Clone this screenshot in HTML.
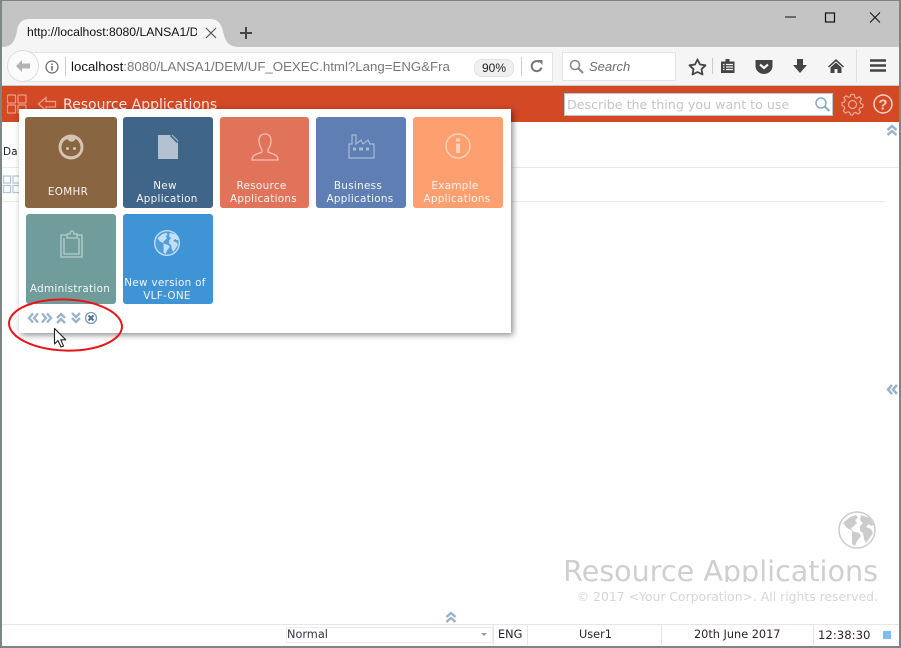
<!DOCTYPE html>
<html><head><meta charset="utf-8"><style>
html,body{margin:0;padding:0;background:#fff}
#r{position:relative;width:901px;height:648px;overflow:hidden;background:#fff;font-family:"DejaVu Sans",sans-serif}
#r div,#r svg,#r span.a{position:absolute}
.t{white-space:nowrap}
.tile{border-radius:3px;color:#f4f4f4;font-size:10.4px;line-height:13px;text-align:center;letter-spacing:.3px}
.tile .l{left:-1px;right:1px;top:76px;white-space:nowrap}
.tile .f{left:-5px;right:1px;top:63px;white-space:nowrap}
.fr{font-family:"Liberation Sans",sans-serif}
.st{font-size:11.300px;line-height:14px;color:#322}
</style></head><body><div id="r">
<!-- tab strip -->
<div style="left:0;top:0;width:901px;height:47px;background:#c4c4c4"></div>
<div style="left:0;top:47px;width:901px;height:38px;background:#f5f5f5"></div>
<div style="left:0;top:85px;width:901px;height:1px;background:#c9c9c9"></div>
<svg style="left:2px;top:19px" width="240" height="29"><path d="M0 28C10 28 13 22 15 12C16 5 19 0 28 0H208C216 0 219 5 221 12C223 22 226 28 238 28Z" fill="#f5f5f5"/></svg>
<div class="t fr" style="left:27px;top:25px;width:170px;overflow:hidden;font-size:12.200px;line-height:15px;color:#111">http://localhost:8080/LANSA1/D</div>
<svg style="left:204px;top:26px" width="14" height="14"><path d="M2 2L12 12M12 2L2 12" stroke="#555" stroke-width="1.2" fill="none"/></svg>
<svg style="left:239px;top:26px" width="14" height="14"><path d="M7 1V13M1 7H13" stroke="#444" stroke-width="2" fill="none"/></svg>
<!-- window controls -->
<svg style="left:775px;top:8px" width="120" height="20" fill="none" stroke="#111"><path d="M10 9H21" stroke-width="1"/><rect x="50.500" y="5" width="9" height="9" stroke-width="1.200"/><path d="M95 4.500L105 14.500M105 4.500L95 14.500" stroke-width="1"/></svg>
<!-- url bar -->
<div style="left:19px;top:52px;width:533px;height:28px;background:#fff;border:1px solid #e4e4e4;border-left:0"></div>
<div style="left:7px;top:50px;width:30px;height:30px;border-radius:50%;background:#fbfbfb;border:1px solid #ddd"></div>
<svg style="left:14px;top:58px" width="18" height="16"><path d="M8 2L2 8L8 14V10.500H16V5.500H8Z" fill="#b3b3b3"/></svg>
<svg style="left:45px;top:60px" width="14" height="14" fill="none"><circle cx="7" cy="7" r="6" stroke="#666" stroke-width="1.200"/><path d="M7 6V10.500M7 3.500V5" stroke="#666" stroke-width="1.500"/></svg>
<div style="left:65px;top:57px;width:1px;height:19px;background:#ccc"></div>
<div class="t fr" style="left:71px;top:59px;font-size:13.250px;line-height:16px;color:#777"><span style="color:#111">localhost</span>:8080/LANSA1/DEM/UF_OEXEC.html?Lang=ENG&amp;Fra</div>
<div style="left:473px;top:52px;width:79px;height:28px;background:#fff;border-top:1px solid #e4e4e4;border-bottom:1px solid #e4e4e4"></div>
<div class="t fr" style="left:474px;top:59px;width:38px;height:16px;border-radius:8px;background:#f0f0f0;border:1px solid #e2e2e2;text-align:center;font-size:12px;line-height:16px;color:#222">90%</div>
<div style="left:521px;top:57px;width:1px;height:19px;background:#ccc"></div>
<svg style="left:530px;top:59px" width="14" height="14" fill="none"><path d="M11.500 8.500A5 5 0 1 1 9.500 3" stroke="#777" stroke-width="2"/><path d="M7.500 1L12.500 1V6Z" fill="#777"/></svg>
<!-- search -->
<div style="left:562px;top:52px;width:112px;height:27px;background:#fff;border:1px solid #e4e4e4"></div>
<svg style="left:569px;top:59px" width="16" height="15" fill="none" stroke="#888"><circle cx="6" cy="6" r="4.500" stroke-width="1.600"/><path d="M9.500 9.500L14 14" stroke-width="2"/></svg>
<div class="t fr" style="left:589px;top:59px;font-size:13px;line-height:16px;color:#6e6e6e;font-style:italic">Search</div>
<!-- toolbar icons -->
<svg style="left:688px;top:57px" width="20" height="19"><path d="M9.500 2.500L12 7.500L17.500 8.300L13.500 12.200L14.500 17.500L9.500 15L4.500 17.500L5.500 12.200L1.500 8.300L7 7.500Z" fill="none" stroke="#444" stroke-width="1.800" stroke-linejoin="round"/></svg>
<div style="left:712px;top:58px;width:1px;height:16px;background:#ccc"></div>
<svg style="left:720px;top:58px" width="16" height="16"><path d="M1 3.500H5.500V1H9.500V3.500H14.500V15H1Z" fill="#444"/><path d="M3 6.500H4.500M6 6.500H13M3 9H4.500M6 9H13M3 11.500H4.500M6 11.500H13" stroke="#f5f5f5" stroke-width="1.200"/></svg>
<svg style="left:755px;top:59px" width="18" height="15"><path d="M1 1.500H17V7A8 7.500 0 0 1 1 7Z" fill="#444" stroke="#444" stroke-linejoin="round"/><path d="M5 5.500L9 9L13 5.500" stroke="#f5f5f5" stroke-width="2.200" fill="none"/></svg>
<svg style="left:792px;top:58px" width="16" height="16"><path d="M5 1H11V7H15L8 15L1 7H5Z" fill="#444"/></svg>
<svg style="left:828px;top:58px" width="16" height="16"><path d="M8 1L0 8.500L1 9.500L8 3.200L15 9.500L16 8.500Z" fill="#444"/><path d="M8 4.500L2.500 9.500V15H6.500V11H9.500V15H13.500V9.500Z" fill="#444"/></svg>
<div style="left:856px;top:49px;width:1px;height:33px;background:#e0e0e0"></div>
<svg style="left:870px;top:59px" width="17" height="14"><path d="M0 1.500H16M0 6.500H16M0 11.500H16" stroke="#444" stroke-width="2.600"/></svg>
<!-- orange bar -->
<div style="left:2px;top:86px;width:898px;height:36px;background:#d34825"></div>
<svg style="left:6px;top:94px" width="22" height="24" fill="none" stroke="#ee9c86" stroke-width="1.200"><rect x="1.500" y="1" width="8" height="8" rx=".8"/><rect x="12" y="1" width="8" height="8" rx=".8"/><rect x="1.500" y="11" width="8" height="8" rx=".8"/><rect x="12" y="11" width="8" height="8" rx=".8"/></svg>
<svg style="left:37px;top:96px" width="20" height="17" fill="none" stroke="#f3a48f" stroke-width="1.200"><path d="M9 1.500L1.500 8L9 14.500V11H18.500V5.500H9Z"/></svg>
<div class="t" style="left:63px;top:96px;font-size:14px;line-height:18px;color:#fbe6e0">Resource Applications</div>
<div style="left:564px;top:93px;width:267px;height:21px;background:#fff;border:1px solid #b8c6d4"></div>
<div class="t" style="left:567px;top:97px;font-size:12.650px;line-height:16px;color:#c6c6c6">Describe the thing you want to use</div>
<svg style="left:814px;top:96px" width="18" height="17" fill="none" stroke="#88a9c8"><circle cx="7" cy="7" r="5" stroke-width="1.500"/><path d="M10.500 10.500L15.500 15" stroke-width="2"/></svg>
<svg style="left:841px;top:93px" width="23" height="23" viewBox="0 0 23 23" fill="none" stroke="#f0a997" stroke-width="1.200"><circle cx="11.500" cy="11.500" r="4"/><path d="M9.800 1.500H13.200L13.800 4.400L15.800 5.300L18.300 3.700L20.500 6.200L18.800 8.600L19.600 10.300L22 11.500L21.600 14.300L18.900 14.900L18 16.800L19.500 19.300L17 21L14.900 19.400L12.900 20L11.500 22L9.500 21.800L8.800 19.500L6.800 18.800L4.300 20.100L2.300 17.800L3.900 15.400L3 13.500L1 12.500V9.700L3.500 9L4.300 7.100L2.900 4.600L5.300 2.800L7.500 4.300L9.300 3.700Z" stroke-linejoin="round"/></svg>
<svg style="left:873px;top:94px" width="20" height="20" fill="none"><circle cx="10" cy="10" r="9" stroke="#f8d2c8" stroke-width="1.500"/><text x="10" y="15.500" font-family="Liberation Sans" font-weight="bold" font-size="15" text-anchor="middle" fill="#f8d2c8">?</text></svg>
<!-- underlying content -->
<div class="t" style="left:3px;top:146px;font-size:10.500px;line-height:12px;color:#223">Da</div>
<div style="left:2px;top:167px;width:897px;height:1px;background:#eaeaea"></div>
<div style="left:2px;top:201px;width:883px;height:1px;background:#eaeaea"></div>
<svg style="left:2px;top:175px" width="18" height="20" fill="none" stroke="#b4c6d8" stroke-width="1.300"><rect x="1.500" y="1" width="7" height="7"/><rect x="11" y="1" width="7" height="7"/><rect x="1.500" y="10.500" width="7" height="7"/><rect x="11" y="10.500" width="7" height="7"/></svg>
<!-- side chevrons -->
<svg style="left:886px;top:124px" width="12" height="13" fill="none" stroke="#9bb3cc" stroke-width="2.500"><path d="M1.500 6L6 2L10.500 6M1.500 11L6 7L10.500 11"/></svg>
<svg style="left:886px;top:383px" width="12" height="13" fill="none" stroke="#9bb3cc" stroke-width="2.500"><path d="M6 2L2 6.500L6 11M11 2L7 6.500L11 11"/></svg>
<svg style="left:445px;top:611px" width="12" height="13" fill="none" stroke="#9bb3cc" stroke-width="2.500"><path d="M1.500 6L6 2L10.500 6M1.500 11L6 7L10.500 11"/></svg>
<!-- branding -->
<svg style="left:838px;top:511px" width="38" height="38" viewBox="0 0 38 38"><circle cx="19" cy="19" r="18" fill="#fff" stroke="#ccc" stroke-width="1.500"/><path d="M5 12L12 6L18 4L20 7L17 9L19 12L15 16L13 17L15 20L9 17ZM14 20L21 22L23 25L19 30L17 35L14 33L14 27ZM23 4L32 7L36 14L33 15L31 13L28 16L33 18L35 22L31 28L28 32L26 28L25 22L22 20L22 15L25 12L22 9Z" fill="#ccc"/></svg>
<div class="t" style="right:23px;top:553px;height:29px;overflow:hidden;font-size:28.600px;line-height:36px;color:#cfcfcf">Resource Applications</div>
<div class="t" style="right:23px;top:589px;font-size:12.400px;line-height:16px;color:#d6d6d6">© 2017 &lt;Your Corporation&gt;. All rights reserved.</div>
<!-- status bar -->
<div style="left:2px;top:624px;width:897px;height:1px;background:#e6e6e6"></div>
<div style="left:286px;top:627px;width:205px;height:14px;border:1px solid #ececec"></div>
<div class="t st" style="left:287px;top:628px;color:#334">Normal</div>
<svg style="left:481px;top:633px" width="7" height="4"><path d="M0 0H6L3 3Z" fill="#999"/></svg>
<div style="left:493px;top:625px;width:1px;height:20px;background:#e6e6e6"></div>
<div class="t st" style="left:498px;top:628px;color:#223">ENG</div>
<div style="left:527px;top:625px;width:1px;height:20px;background:#e6e6e6"></div>
<div class="t st" style="left:579px;top:628px">User1</div>
<div style="left:661px;top:625px;width:1px;height:20px;background:#e6e6e6"></div>
<div class="t st" style="left:694px;top:628px">20th June 2017</div>
<div style="left:813px;top:625px;width:1px;height:20px;background:#e6e6e6"></div>
<div class="t st" style="left:818px;top:628px;font-size:11.700px">12:38:30</div>
<div style="left:883px;top:631px;width:8px;height:8px;background:#7fbcf5"></div>
<!-- popup -->
<div style="left:19px;top:109px;width:492px;height:224px;background:#fff;box-shadow:2px 2px 6px rgba(0,0,0,.45)"></div>
<div class="tile" style="left:25px;top:117px;width:92px;height:91px;background:#8a6542">
 <svg style="left:33px;top:17px" width="26" height="26"><circle cx="13" cy="13" r="12.500" fill="#d5c4b3"/><path d="M3.500 14C3.500 9 6 6 9.500 5C11 8.500 16 8.500 17.500 5C21 6.500 22.500 10 22.500 14C22 25 4 25 3.500 14Z" fill="#8a6542"/><circle cx="9.500" cy="14.500" r="1.500" fill="#d5c4b3"/><circle cx="16.500" cy="14.500" r="1.500" fill="#d5c4b3"/></svg>
 <div class="f" style="top:69px">EOMHR</div></div>
<div class="tile" style="left:123px;top:117px;width:90px;height:91px;background:#3f6589">
 <svg style="left:34px;top:17px" width="22" height="26"><path d="M1 1H13L21 9V25H1Z" fill="#b4c1d0"/><path d="M13.500 2L20 8.500" stroke="#3f6589" stroke-width="1"/><path d="M15 1L21 7" stroke="#b4c1d0" stroke-width="1"/></svg>
 <div class="f">New</div><div class="l">Application</div></div>
<div class="tile" style="left:220px;top:117px;width:89px;height:91px;background:#e0735a">
 <svg style="left:30px;top:16px" width="30" height="29" fill="none" stroke="#f3c0b2" stroke-width="1.300"><path d="M15 1C10 1 9 5 9 8C9 12 11 15 12 17V19C8 21 2 21 2 27H28C28 21 22 21 18 19V17C19 15 21 12 21 8C21 5 20 1 15 1Z"/></svg>
 <div class="f">Resource</div><div class="l">Applications</div></div>
<div class="tile" style="left:316px;top:117px;width:90px;height:91px;background:#5f7fb4">
 <svg style="left:32px;top:16px" width="27" height="27" fill="none" stroke="#a8bad7" stroke-width="1.200"><path d="M1 25V11H4V2H8V11L13 7L15 11L20 7L22 11H26V25Z"/><path d="M5 16H8M11 16H15M18 16H21" stroke-width="3"/></svg>
 <div class="f">Business</div><div class="l">Applications</div></div>
<div class="tile" style="left:413px;top:117px;width:90px;height:91px;background:#fe9f70">
 <svg style="left:32px;top:16px" width="26" height="26" fill="none" stroke="#ffd3bb" stroke-width="1.400"><circle cx="13" cy="13" r="12"/><path d="M13 10.500V20" stroke-width="4"/><path d="M13 5.500V8.500" stroke-width="4"/></svg>
 <div class="f">Example</div><div class="l">Applications</div></div>
<div class="tile" style="left:26px;top:214px;width:90px;height:90px;background:#709d9b">
 <svg style="left:34px;top:16px" width="24" height="28" fill="none" stroke="#b6cfcd" stroke-width="1.300"><path d="M6 5H1V27H22V5H17"/><path d="M4 8V24H19V8"/><path d="M7 8V4H10C10 0 14 0 14 4H17V8Z"/></svg>
 <div class="l" style="top:69px">Administration</div></div>
<div class="tile" style="left:123px;top:214px;width:90px;height:90px;background:#3f94d6">
 <svg style="left:31px;top:16px" width="26" height="26" viewBox="0 0 38 38"><circle cx="19" cy="19" r="18" fill="#4f9edb" stroke="#c4def3" stroke-width="2"/><path d="M5 12L12 6L18 4L20 7L17 9L19 12L15 16L13 17L15 20L9 17ZM14 20L21 22L23 25L19 30L17 35L14 33L14 27ZM23 4L32 7L36 14L33 15L31 13L28 16L33 18L35 22L31 28L28 32L26 28L25 22L22 20L22 15L25 12L22 9Z" fill="#c4def3"/></svg>
 <div class="f">New version of</div><div class="l">VLF-ONE</div></div>
<!-- popup controls -->
<svg style="left:27px;top:311px" width="72" height="14" fill="none" stroke="#9bb3cc" stroke-width="2.400"><path d="M6 2.500L2 7L6 11.500M11 2.500L7 7L11 11.500M15 2.500L19 7L15 11.500M20 2.500L24 7L20 11.500M30 7L34 3L38 7M30 12L34 8L38 12M45 2L49 6L53 2M45 7L49 11L53 7"/><circle cx="64" cy="7" r="5.500" stroke="#7c9abb" stroke-width="1.300"/><path d="M61.500 4.500L66.500 9.500M66.500 4.500L61.500 9.500" stroke="#4c7097" stroke-width="2"/></svg>
<!-- red ellipse -->
<svg style="left:2px;top:292px" width="128" height="66" fill="none"><ellipse cx="63.500" cy="33" rx="56.500" ry="25.500" transform="rotate(2 63 33)" stroke="#e8141a" stroke-width="2"/></svg>
<!-- cursor -->
<svg style="left:53px;top:327px" width="15" height="22"><path d="M1.500 1.500V17L5 13.500L8 20L10.500 19L7.800 12.800H12.800Z" fill="#fff" stroke="#222" stroke-width="1.100" stroke-linejoin="round"/></svg>
<!-- window frame -->
<div style="left:0;top:0;width:901px;height:1px;background:#7f8583"></div>
<div style="left:0;top:0;width:2px;height:648px;background:#7f8583"></div>
<div style="left:899px;top:0;width:2px;height:648px;background:#7f8583"></div>
<div style="left:0;top:646px;width:901px;height:2px;background:#7f8583"></div>
</div></body></html>
